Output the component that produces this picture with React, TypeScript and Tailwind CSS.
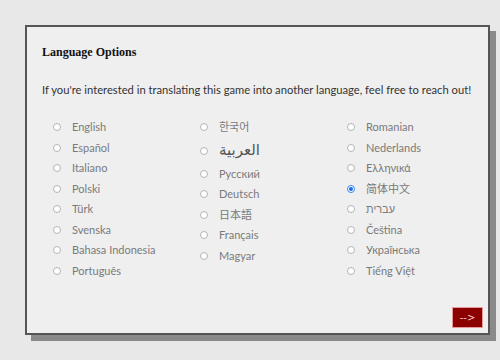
import React from "react";

const columns: string[][] = [
  ["English", "Español", "Italiano", "Polski", "Türk", "Svenska", "Bahasa Indonesia", "Português"],
  ["한국어", "العربية", "Русский", "Deutsch", "日本語", "Français", "Magyar"],
  ["Romanian", "Nederlands", "Ελληνικά", "简体中文", "עברית", "Čeština", "Українська", "Tiếng Việt"],
];

const selected = "简体中文";

function Radio({ checked }: { checked: boolean }) {
  return (
    <span
      className={
        checked
          ? "flex h-[8px] w-[8px] shrink-0 items-center justify-center rounded-full border border-[#3b82f6] bg-white"
          : "flex h-[8px] w-[8px] shrink-0 items-center justify-center rounded-full border border-[#b5b5b5] bg-white"
      }
    >
      {checked && <span className="h-[4px] w-[4px] rounded-full bg-[#1a6fe0]" />}
    </span>
  );
}

export default function App() {
  return (
    <div className="h-[360px] w-[500px] bg-[#e8e8e8] pl-[25px] pt-[25px]">
      <div className="flex h-[310px] w-[465px] flex-col border-2 border-[#555] bg-[#efefef] shadow-[6px_6px_0_#8a8a8a]">
        <div className="pl-[15px] pt-[17px]">
          <h2 className="text-[12px] font-bold leading-[16px] text-[#111] [font-family:'Liberation_Serif',serif]">
            Language Options
          </h2>
          <p className="mt-[22px] whitespace-nowrap text-[11.2px] leading-[16px] text-[#333] [font-family:Lato,sans-serif]">
            If you're interested in translating this game into another language, feel free to reach out!
          </p>
        </div>

        <div className="mt-[19px] grid w-[456px] grid-cols-3 pl-[15px]">
          {columns.map((col, ci) => (
            <ul key={ci} className="flex flex-col pl-[11px]">
              {col.map((lang) => (
                <li
                  key={lang}
                  className={
                    lang === "العربية"
                      ? "flex h-[26px] items-center gap-[11px]"
                      : "flex h-[20.5px] items-center gap-[11px]"
                  }
                >
                  <Radio checked={lang === selected} />
                  <span
                    className={
                      lang === "العربية"
                        ? "text-[15px] text-[#555] [font-family:'DejaVu_Sans',sans-serif]"
                        : "text-[11px] text-[#7a7a7a] [font-family:Lato,'Noto_Sans','Noto_Sans_CJK_SC',sans-serif]"
                    }
                  >
                    {lang}
                  </span>
                </li>
              ))}
            </ul>
          ))}
        </div>

        <div className="mt-auto flex justify-end pb-[5px] pr-[5px]">
          <button className="flex h-[21px] w-[31px] items-center justify-center border border-[#e89a9a] bg-[#8b0000] text-[10px] text-[#f3c9c9] [font-family:'DejaVu_Sans',sans-serif]">
            --&gt;
          </button>
        </div>
      </div>
    </div>
  );
}
